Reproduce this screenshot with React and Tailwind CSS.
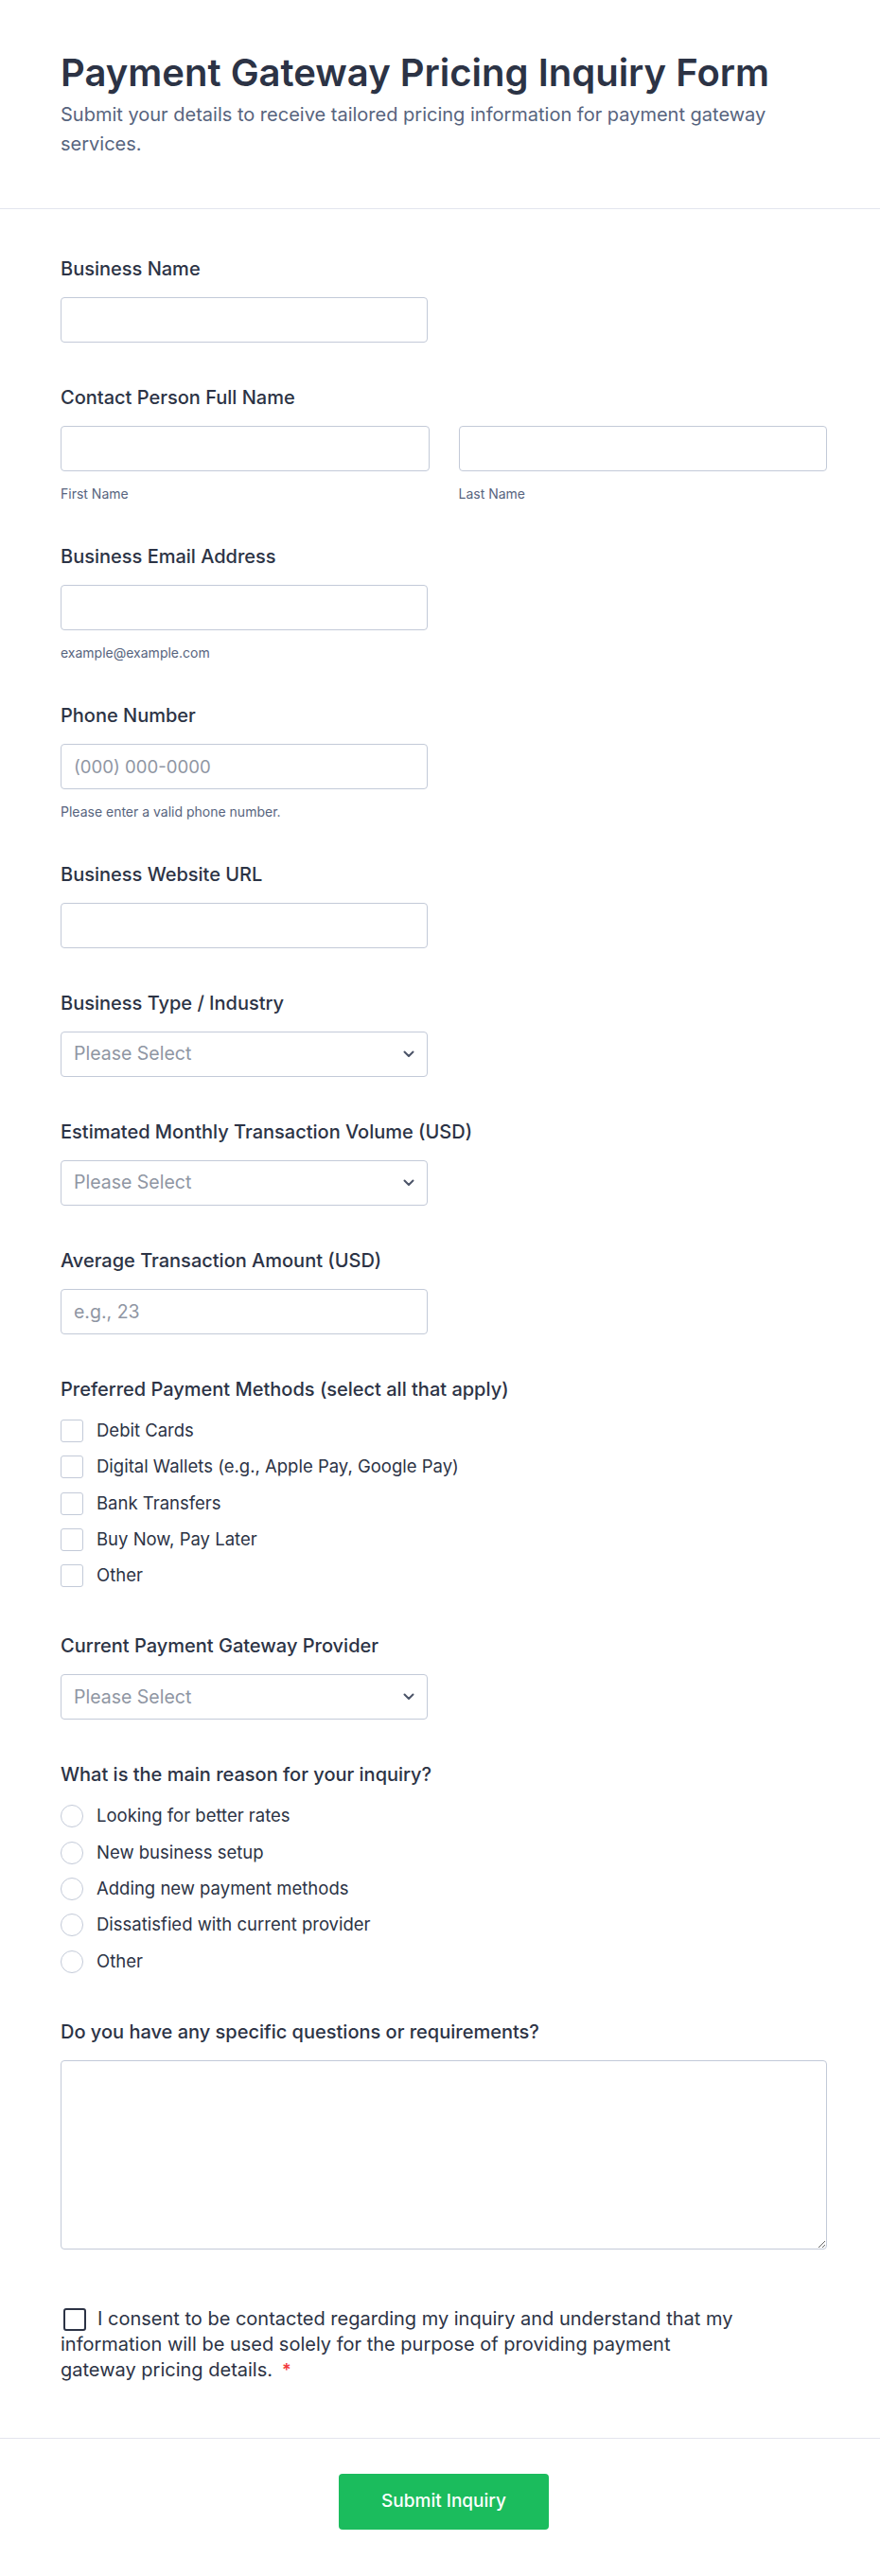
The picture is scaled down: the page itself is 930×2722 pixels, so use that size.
import React from "react";

const checkOptions = [
  "Debit Cards",
  "Digital Wallets (e.g., Apple Pay, Google Pay)",
  "Bank Transfers",
  "Buy Now, Pay Later",
  "Other",
];

const reasonOptions = [
  "Looking for better rates",
  "New business setup",
  "Adding new payment methods",
  "Dissatisfied with current provider",
  "Other",
];

function Label({ children }) {
  return (
    <div className="text-[20px] leading-7 font-medium text-[#2c3345] mb-4">{children}</div>
  );
}

function TextInput({ placeholder, wide, small }) {
  return (
    <input
      type="text"
      placeholder={placeholder}
      className={
        (wide ? "w-full" : "w-[388px]") +
        (small ? " text-[18.6px]" : " text-[19.5px]") +
        " h-12 block rounded-[4px] border border-[#c3cad8] bg-white px-[13px] text-[#2c3345] placeholder:text-[#8f96a3] outline-none"
      }
    />
  );
}

function Hint({ children }) {
  return <div className="mt-[15px] text-[14px] leading-[17px] text-[#57647e]">{children}</div>;
}

function Select() {
  return (
    <div className="w-[388px] h-12 flex items-center justify-between rounded-[4px] border border-[#c3cad8] bg-white pl-[13px] pr-[13px]">
      <span className="text-[19.5px] text-[#8f96a3]">Please Select</span>
      <svg width="12" height="8" viewBox="0 0 12 8" fill="none">
        <path d="M1.5 1.5l4.5 4.5 4.5-4.5" stroke="#4b5468" strokeWidth="2" strokeLinecap="round" strokeLinejoin="round" />
      </svg>
    </div>
  );
}

function OptionList({ items, round }) {
  return (
    <div className="flex flex-col gap-[10.33px]">
      {items.map((item) => (
        <label key={item} className="h-7 flex items-center gap-[14px] text-[18.5px] text-[#2c3345]">
          <span
            className={
              "w-6 h-6 shrink-0 border border-[#c3cad8] bg-white " +
              (round ? "rounded-full" : "rounded-[3px]")
            }
          />
          {item}
        </label>
      ))}
    </div>
  );
}

export default function App() {
  return (
    <div className="min-h-screen bg-white font-['Inter',sans-serif] text-[#2c3345]">
      <header className="pl-16 pr-14 pt-[53px] pb-[52px] border-b border-[#e3e5ee]">
        <h1 className="text-[40px] leading-[48px] font-semibold text-[#2c3345]">
          Payment Gateway Pricing Inquiry Form
        </h1>
        <p className="mt-[5px] text-[20px] leading-[31px] text-[#57647e]">
          Submit your details to receive tailored pricing information for payment gateway services.
        </p>
      </header>

      <form className="pl-16 pr-14 pt-[49px]">
        <div className="mb-[44px]">
          <Label>Business Name</Label>
          <TextInput />
        </div>

        <div className="mb-[44px]">
          <Label>Contact Person Full Name</Label>
          <div className="grid grid-cols-2 gap-[31px]">
            <div>
              <TextInput wide />
              <Hint>First Name</Hint>
            </div>
            <div>
              <TextInput wide />
              <Hint>Last Name</Hint>
            </div>
          </div>
        </div>

        <div className="mb-[44px]">
          <Label>Business Email Address</Label>
          <TextInput />
          <Hint>example@example.com</Hint>
        </div>

        <div className="mb-[44px]">
          <Label>Phone Number</Label>
          <TextInput placeholder="(000) 000-0000" small />
          <Hint>Please enter a valid phone number.</Hint>
        </div>

        <div className="mb-[44px]">
          <Label>Business Website URL</Label>
          <TextInput />
        </div>

        <div className="mb-[44px]">
          <Label>Business Type / Industry</Label>
          <Select />
        </div>

        <div className="mb-[44px]">
          <Label>Estimated Monthly Transaction Volume (USD)</Label>
          <Select />
        </div>

        <div className="mb-[44px]">
          <Label>Average Transaction Amount (USD)</Label>
          <TextInput placeholder="e.g., 23" />
        </div>

        <div className="mb-[46px]">
          <Label>Preferred Payment Methods (select all that apply)</Label>
          <OptionList items={checkOptions} />
        </div>

        <div className="mb-[44px]">
          <Label>Current Payment Gateway Provider</Label>
          <Select />
        </div>

        <div className="mb-[46px]">
          <Label>What is the main reason for your inquiry?</Label>
          <OptionList items={reasonOptions} round />
        </div>

        <div className="mb-[60px]">
          <Label>Do you have any specific questions or requirements?</Label>
          <textarea className="block w-full h-[200px] rounded-[4px] border border-[#c3cad8] bg-white p-3 text-[18px] outline-none" />
        </div>

        <div className="max-w-[715px] pb-[58px] text-[20px] leading-[27px] text-[#2c3345]">
          <span className="inline-block align-middle w-6 h-6 ml-[3px] mr-3 border-2 border-[#2c3345] rounded-[3px]" />
          I consent to be contacted regarding my inquiry and understand that my information will be used solely for the purpose of providing payment gateway pricing details.
          <span className="ml-[10px] font-semibold text-[#f23a3c] text-[18px]">*</span>
        </div>
      </form>

      <div className="border-t border-[#e3e5ee] pl-16 pr-14 pt-[37px] pb-[50px] flex justify-center">
        <button className="w-[222px] h-[59px] rounded-[4px] bg-[#1bbc5d] text-white text-[19px] font-medium">
          Submit Inquiry
        </button>
      </div>
    </div>
  );
}
